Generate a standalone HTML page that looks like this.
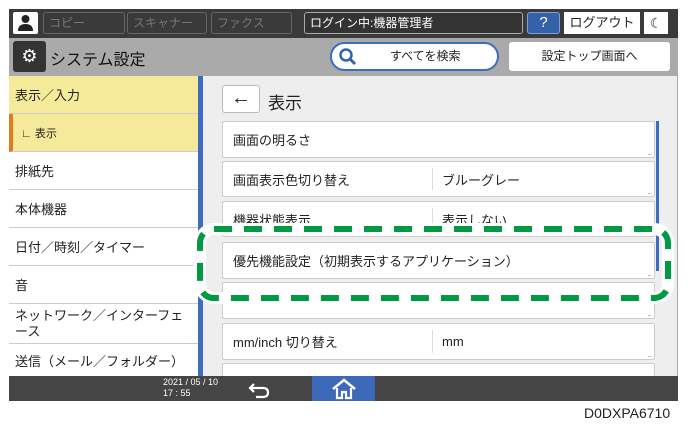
<!DOCTYPE html>
<html><head><meta charset="utf-8"><style>
*{margin:0;padding:0;box-sizing:border-box}
body{width:691px;height:427px;background:#fff;position:relative;overflow:hidden;font-family:"Liberation Sans","Noto Sans CJK JP",sans-serif;color:#222}
.a{position:absolute}
.tb{background:#3a3a3a;left:9px;top:9px;width:669px;height:29px}
.tab{border:1px solid #666;border-radius:3px;color:#777;font-size:12px;padding-left:5px;line-height:20px;height:22px;top:12px}
.hd{background:#aaa;left:9px;top:38px;width:669px;height:38px}
.nav{left:9px;top:76px;width:189px;height:300px;background:#fff}
.ni{position:absolute;left:0;width:189px;border-bottom:1px solid #ccc;font-size:13px;padding-left:6px;padding-right:4px;display:flex;align-items:center}
.ct{left:198px;top:76px;width:480px;height:300px;background:#eee;border-left:5px solid #3d6cc0;border-right:1px solid #aaa}
.row{position:absolute;left:222px;width:433px;background:#fff;border:1px solid #ccc;border-radius:2px;font-size:13px;padding-left:10px;display:flex;align-items:center}
.row .v{position:absolute;left:209px;top:6px;bottom:6px;border-left:1px solid #ddd;padding-left:9px;display:flex;align-items:center}
.dots{position:absolute;right:3px;bottom:1px;font-size:8px;color:#999;line-height:7px;letter-spacing:-1px}
.bb{left:9px;top:376px;width:669px;height:25px;background:#454545}
</style></head><body>
<div class="a tb"></div>
<div class="a" style="left:13px;top:12px;width:25px;height:22px;background:#fff;border-radius:2px"><svg width="25" height="22"><circle cx="12.5" cy="7" r="4" fill="#222"/><path d="M5 19 Q5 12 12.5 12 Q20 12 20 19Z" fill="#222"/></svg></div>
<div class="a tab" style="left:43px;width:82px">コピー</div>
<div class="a tab" style="left:127px;width:80px">スキャナー</div>
<div class="a tab" style="left:211px;width:81px">ファクス</div>
<div class="a tab" style="left:304px;width:219px;color:#fff;border-color:#aaa;background:#333">ログイン中:機器管理者</div>
<div class="a" style="left:527px;top:12px;width:33px;height:22px;background:#3561a8;border:1px solid #7fa0d6;border-radius:3px;color:#fff;font-size:15px;text-align:center;line-height:20px">?</div>
<div class="a" style="left:564px;top:12px;width:76px;height:22px;background:#fff;font-size:13px;text-align:center;line-height:22px">ログアウト</div>
<div class="a" style="left:644px;top:12px;width:24px;height:22px;background:#fff;font-size:14px;text-align:center;line-height:22px">☾</div>
<div class="a hd"></div>
<div class="a" style="left:13px;top:41px;width:33px;height:31px;background:#333;border-radius:3px;color:#fff;font-size:18px;line-height:31px;text-align:center">⚙</div>
<div class="a" style="left:50px;top:46px;font-size:16px;color:#111">システム設定</div>
<div class="a" style="left:330px;top:42px;width:169px;height:29px;background:#fff;border:2px solid #3d6cc0;border-radius:15px;font-size:12px;line-height:25px;padding-left:58px">すべてを検索</div>
<svg class="a" style="left:338px;top:47px" width="20" height="20"><circle cx="8" cy="8" r="5.5" fill="none" stroke="#3561a8" stroke-width="2.5"/><path d="M12 12 L17 17" stroke="#3561a8" stroke-width="3"/></svg>
<div class="a" style="left:509px;top:42px;width:161px;height:29px;background:#fff;border-radius:3px;font-size:12px;line-height:29px;text-align:center">設定トップ画面へ</div>
<div class="a nav">
<div class="ni" style="top:0;height:38px;background:#f5ea9a">表示／入力</div>
<div class="ni" style="top:38px;height:38px;background:#f5ea9a;border-left:4px solid #e07b20;padding-left:8px;font-size:11px">∟ 表示</div>
<div class="ni" style="top:76px;height:38px">排紙先</div>
<div class="ni" style="top:114px;height:38px">本体機器</div>
<div class="ni" style="top:152px;height:38px">日付／時刻／タイマー</div>
<div class="ni" style="top:190px;height:38px">音</div>
<div class="ni" style="top:228px;height:40px;line-height:16px">ネットワーク／インターフェース</div>
<div class="ni" style="top:268px;height:32px;border:0">送信（メール／フォルダー）</div>
</div>
<div class="a ct"></div>
<div class="a" style="left:222px;top:85px;width:38px;height:28px;background:#fff;border:1px solid #bbb;border-radius:3px;font-size:20px;text-align:center;line-height:25px">←</div>
<div class="a" style="left:268px;top:89px;font-size:17px">表示</div>
<div class="row" style="top:121px;height:37px">画面の明るさ<span class="dots">...</span></div>
<div class="row" style="top:161px;height:36px">画面表示色切り替え<div class="v">ブルーグレー</div><span class="dots">...</span></div>
<div class="row" style="top:201px;height:36px">機器状態表示<div class="v">表示しない</div><span class="dots">...</span></div>
<div class="row" style="top:242px;height:37px">優先機能設定（初期表示するアプリケーション）<span class="dots">...</span></div>
<div class="row" style="top:282px;height:37px"><span class="dots">...</span></div>
<div class="row" style="top:323px;height:37px">mm/inch 切り替え<div class="v">mm</div><span class="dots">...</span></div>
<div class="row" style="top:363px;height:13px;border-bottom:0"></div>
<div class="a" style="left:656px;top:121px;width:3px;height:150px;background:#3d6cc0"></div>
<svg class="a" style="left:0;top:0" width="691" height="427"><rect x="200" y="229" width="468" height="69" rx="14" fill="none" stroke="#fff" stroke-width="12"/><rect x="200" y="229" width="468" height="69" rx="14" fill="none" stroke="#009944" stroke-width="6" stroke-dasharray="18 12"/></svg>
<div class="a bb"></div>
<div class="a" style="left:163px;top:377px;color:#fff;font-size:9px;line-height:11px">2021 / 05 / 10<br>17 : 55</div>
<svg class="a" style="left:246px;top:378px" width="28" height="22"><path d="M8 6 L4 10 L8 14 M4 10 H17 Q22 10 22 14.5 Q22 19 17 19 H10" fill="none" stroke="#fff" stroke-width="2.2"/></svg>
<div class="a" style="left:312px;top:376px;width:63px;height:25px;background:#3d69b8"></div>
<svg class="a" style="left:331px;top:378px" width="26" height="22"><path d="M2 11 L13 2 L24 11" fill="none" stroke="#fff" stroke-width="2.5"/><path d="M6 10 V20 H11 V14 H15 V20 H20 V10" fill="none" stroke="#fff" stroke-width="2.2"/></svg>
<div class="a" style="left:584px;top:405px;font-size:14px;color:#222">D0DXPA6710</div>
</body></html>
